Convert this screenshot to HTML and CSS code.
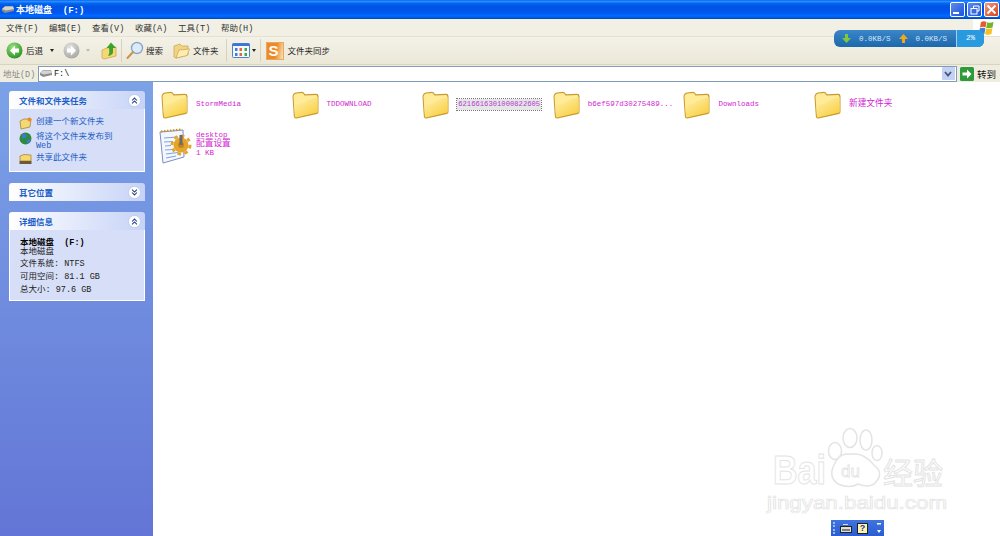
FILE: index.html
```html
<!DOCTYPE html>
<html>

<head>
    <meta charset="utf-8">
    <title>本地磁盘 (F:)</title>
    <link rel="stylesheet" href="styles.css">
</head>

<body>
    <svg class="defs" width="0" height="0">
        <defs>
            <linearGradient id="folderFill" x1="0" y1="0" x2="0.7" y2="1">
                <stop offset="0" stop-color="#fff3b4" />
                <stop offset="1" stop-color="#f9d044" />
            </linearGradient>
            <radialGradient id="greenBall" cx="0.4" cy="0.3" r="0.8">
                <stop offset="0" stop-color="#9be27c" />
                <stop offset="1" stop-color="#1c8a1c" />
            </radialGradient>
            <radialGradient id="greyBall" cx="0.4" cy="0.3" r="0.8">
                <stop offset="0" stop-color="#e4e4e0" />
                <stop offset="1" stop-color="#a0a09c" />
            </radialGradient>
            <symbol id="folder" viewBox="0 0 28 28">
                <path d="M1.500 6 Q1.500 2 5 1.500 L11 0.800 Q13 0.800 14 3.300 L25 2.800 Q27.500 2.800 27.500 5 L27.500 21 Q27.500 22.500 26 23 L5.500 27.500 Q3 28 2.800 25 Z" fill="#c99a30" />
                <path d="M2.500 6 Q2.500 3 5.500 2.500 L11 2 Q12.500 2 13.500 4.500 L25.500 4 L26.500 6 L26.500 21 L4 26 Z" fill="#ffeb98" />
                <path d="M26.500 6 L26.500 21.500 L5 26.500 Q4 26.500 4 25 L3.200 13.500 Q12 13.500 16 9.500 Z" fill="url(#folderFill)" />
            </symbol>
            <symbol id="collapse" viewBox="0 0 16 16">
                <circle cx="8" cy="8" r="7.500" fill="#fff" stroke="#b9c6ee" />
                <path d="M5 8 L8 5 L11 8 M5 11.500 L8 8.500 L11 11.500" fill="none" stroke="#24418f" stroke-width="1.300" />
            </symbol>
            <symbol id="expand" viewBox="0 0 16 16">
                <circle cx="8" cy="8" r="7.500" fill="#fff" stroke="#b9c6ee" />
                <path d="M5 4.500 L8 7.500 L11 4.500 M5 8 L8 11 L11 8" fill="none" stroke="#24418f" stroke-width="1.300" />
            </symbol>
            <symbol id="drive" viewBox="0 0 14 9">
                <path d="M1 4 L4 1 L12 1 L13 4 L13 6 L4 8 L1 6 Z" fill="#8c8c8c" />
                <path d="M1 4 L4 1.500 L12 1.500 L13 4 L5 5.500 Z" fill="#d4d4d4" />
            </symbol>
        </defs>
    </svg>

    <div class="window">
        <div class="titlebar">
            <svg class="title-icon" width="14" height="9"><use href="#drive" /></svg>
            <span class="title-text">本地磁盘  (F:)</span>
            <div class="caption-btns">
                <div class="caption-btn"><span class="min-glyph"></span></div>
                <div class="caption-btn">
                    <svg width="10" height="10" viewBox="0 0 10 10">
                        <path d="M3.500 3 V1 H9 V6 H7" fill="none" stroke="#fff" />
                        <rect x="1" y="3.500" width="6" height="5.500" fill="none" stroke="#fff" />
                    </svg>
                </div>
                <div class="caption-btn close">
                    <svg width="11" height="11" viewBox="0 0 11 11"><path d="M1.500 1.500 L9.500 9.500 M9.500 1.500 L1.500 9.500" stroke="#fff" stroke-width="2" /></svg>
                </div>
            </div>
        </div>

        <div class="menubar">
            <span class="menu-item">文件(F)</span>
            <span class="menu-item">编辑(E)</span>
            <span class="menu-item">查看(V)</span>
            <span class="menu-item">收藏(A)</span>
            <span class="menu-item">工具(T)</span>
            <span class="menu-item">帮助(H)</span>
            <div class="flag-box">
                <svg width="15" height="16" viewBox="0 0 15 16">
                    <path d="M2 2 Q5 0.500 7.500 2 L6.500 7.500 Q4 6 1 7.500 Z" fill="#e8592c" />
                    <path d="M8.200 2.200 Q11 3.500 14.500 2 L13.500 7.500 Q10 9 7.200 7.700 Z" fill="#72b52b" />
                    <path d="M0.900 8.300 Q4 7 6.400 8.300 L5.400 14 Q3 12.500 0 14 Z" fill="#3c7fd8" />
                    <path d="M7.100 8.500 Q10 9.800 13.400 8.300 L12.400 14 Q9 15.500 6.100 14.200 Z" fill="#f6c11f" />
                </svg>
            </div>
        </div>

        <div class="toolbar">
            <svg class="tool-icon back" width="17" height="17" viewBox="0 0 17 17">
                <circle cx="8.500" cy="8.500" r="8" fill="url(#greenBall)" />
                <path d="M9 3.500 L4 8.500 L9 13.500 L9 10.500 L13 10.500 L13 6.500 L9 6.500 Z" fill="#fff" />
            </svg>
            <span class="tool-label">后退</span>
            <span class="drop-arrow back-arrow"></span>
            <svg class="tool-icon forward" width="17" height="17" viewBox="0 0 17 17">
                <circle cx="8.500" cy="8.500" r="8" fill="url(#greyBall)" />
                <path d="M8 3.500 L13 8.500 L8 13.500 L8 10.500 L4 10.500 L4 6.500 L8 6.500 Z" fill="#fff" />
            </svg>
            <span class="drop-arrow off"></span>
            <svg class="tool-icon up" width="16" height="18" viewBox="0 0 16 18">
                <path d="M1 8 L6 6 L15 5 L15 14 L3 17 L1 16 Z" fill="#f4d873" stroke="#c8a24a" stroke-width="0.700" />
                <path d="M10 0.500 L15 6 L12 6 L12 10 Q12 13 7 14 Q9 11 8 6 L5.500 6 Z" fill="#3fa12d" />
            </svg>
            <span class="tool-sep"></span>
            <svg class="tool-icon search" width="18" height="19" viewBox="0 0 18 19">
                <circle cx="11" cy="7" r="5.500" fill="#dcebfa" stroke="#8ca6c6" stroke-width="1.400" />
                <path d="M7 11 L1.500 17" stroke="#c49650" stroke-width="2" stroke-linecap="round" />
            </svg>
            <span class="tool-label search-label">搜索</span>
            <svg class="tool-icon folders" width="17" height="16" viewBox="0 0 17 16">
                <path d="M1 3 L7 1 L9 3 L15 3 L15 12 L3 15 L1 14 Z" fill="#f0d384" stroke="#c8a24a" stroke-width="0.700" />
                <path d="M3 15 L6 7 L16.500 6 L14 12.500 Z" fill="#fdeeb0" stroke="#c8a24a" stroke-width="0.700" />
            </svg>
            <span class="tool-label">文件夹</span>
            <span class="tool-sep views-sep"></span>
            <svg class="tool-icon views" width="18" height="15" viewBox="0 0 18 15">
                <rect x="0.500" y="0.500" width="17" height="14" rx="1" fill="#f4f8ff" stroke="#4f7fd0" />
                <rect x="0.500" y="0.500" width="17" height="2.500" fill="#3f74d4" />
                <path d="M3 5 h2.500 v3 h-2.500 Z M3 10 h2.500 v3 h-2.500 Z" fill="#3c7fd8" />
                <path d="M7.500 5 h2.500 v3 h-2.500 Z M7.500 10 h2.500 v3 h-2.500 Z" fill="#dc6a3c" />
                <path d="M12.500 5 h2.500 v3 h-2.500 Z M12.500 10 h2.500 v3 h-2.500 Z" fill="#4aa63a" />
            </svg>
            <span class="drop-arrow views-arrow"></span>
            <span class="tool-sep sync-sep"></span>
            <div class="sync-icon">S</div>
            <span class="tool-label sync-label">文件夹同步</span>
        </div>

        <div class="addressbar">
            <span class="address-label">地址(D)</span>
            <div class="address-field">
                <svg width="14" height="9"><use href="#drive" /></svg>
                <span class="address-text">F:\</span>
                <div class="address-drop">
                    <svg width="8" height="6" viewBox="0 0 8 6"><path d="M1 1 L4 4.500 L7 1" fill="none" stroke="#44557f" stroke-width="1.800" /></svg>
                </div>
            </div>
            <svg class="go-icon" width="14" height="14" viewBox="0 0 14 14">
                <rect width="14" height="14" rx="1.500" fill="#2f9a3a" />
                <path d="M7 2.500 L11.500 7 L7 11.500 L7 8.500 L2.500 8.500 L2.500 5.500 L7 5.500 Z" fill="#fff" />
            </svg>
            <span class="go-label">转到</span>
        </div>

        <div class="main">
            <div class="sidebar">
                <div class="panel">
                    <div class="panel-head">
                        <span class="panel-title">文件和文件夹任务</span>
                        <svg width="13" height="13"><use href="#collapse" /></svg>
                    </div>
                    <div class="panel-body tasks">
                        <div class="task">
                            <svg class="task-icon" width="13" height="13" viewBox="0 0 13 13">
                                <path d="M1 4 L5 2 L12 2 L11 10 L2 12 Z" fill="#f4d873" stroke="#a98536" stroke-width="0.800" />
                                <circle cx="10.500" cy="2.500" r="2" fill="#ef8a2a" />
                            </svg>
                            <span class="task-link">创建一个新文件夹</span>
                        </div>
                        <div class="task">
                            <svg class="task-icon" width="13" height="13" viewBox="0 0 13 13">
                                <circle cx="6.500" cy="6.500" r="6" fill="#2e8b3d" />
                                <path d="M3 2.500 Q7 1 8 4 Q6 7 3 6 Z M8 8 L12 7 Q11 11 8 12 Z" fill="#3f78d8" />
                            </svg>
                            <span class="task-link">将这个文件夹发布到<br>Web</span>
                        </div>
                        <div class="task">
                            <svg class="task-icon" width="13" height="12" viewBox="0 0 13 12">
                                <path d="M1 3 L5 1.500 L12 2 L12 8 L1 8 Z" fill="#f4d873" stroke="#a98536" stroke-width="0.800" />
                                <path d="M0.500 8 L12.500 8 L12.500 11 L0.500 11 Z" fill="#6b5a3a" />
                            </svg>
                            <span class="task-link">共享此文件夹</span>
                        </div>
                    </div>
                </div>

                <div class="panel">
                    <div class="panel-head">
                        <span class="panel-title">其它位置</span>
                        <svg width="13" height="13"><use href="#expand" /></svg>
                    </div>
                </div>

                <div class="panel">
                    <div class="panel-head">
                        <span class="panel-title">详细信息</span>
                        <svg width="13" height="13"><use href="#collapse" /></svg>
                    </div>
                    <div class="panel-body details">
                        <div class="detail-name">本地磁盘  (F:)</div>
                        <div class="detail-kind">本地磁盘</div>
                        <div class="detail-row">文件系统: NTFS</div>
                        <div class="detail-row">可用空间: 81.1 GB</div>
                        <div class="detail-row">总大小: 97.6 GB</div>
                    </div>
                </div>
            </div>

            <div class="files">
                <div class="file">
                    <svg width="28" height="28"><use href="#folder" /></svg>
                    <span class="file-name">StormMedia</span>
                </div>
                <div class="file">
                    <svg width="28" height="28"><use href="#folder" /></svg>
                    <span class="file-name">TDDOWNLOAD</span>
                </div>
                <div class="file">
                    <svg width="28" height="28"><use href="#folder" /></svg>
                    <span class="file-name selected">6216616301000822605</span>
                </div>
                <div class="file">
                    <svg width="28" height="28"><use href="#folder" /></svg>
                    <span class="file-name">b6ef597d30275489...</span>
                </div>
                <div class="file">
                    <svg width="28" height="28"><use href="#folder" /></svg>
                    <span class="file-name">Downloads</span>
                </div>
                <div class="file">
                    <svg width="28" height="28"><use href="#folder" /></svg>
                    <span class="file-name cjk">新建文件夹</span>
                </div>
                <div class="file settings">
                    <svg width="34" height="36" viewBox="0 0 34 36">
                        <path d="M2 4 L25 2 L26 29 L5 35 Z" fill="#f4f7ff" stroke="#7c8fc0" />
                        <path d="M3 3.500 L24 1.500" stroke="#c8922c" stroke-width="2.200" stroke-dasharray="1.500 1.500" />
                        <path d="M6 10 L20 9 M6 14 L15 13.500 M7 18 L13 17.500 M7 22 L14 21.500 M8 26 L20 24.500 M8 30 L18 28" stroke="#7ea6dc" stroke-width="1.200" />
                        <circle cx="23" cy="17" r="7.500" fill="#e5a52c" />
                        <circle cx="23" cy="17" r="9" fill="none" stroke="#e5a52c" stroke-width="3" stroke-dasharray="3.500 3.500" />
                        <circle cx="23" cy="17" r="3" fill="#c4841c" />
                        <rect x="21.500" y="7" width="3" height="10" fill="#6a6a6a" />
                    </svg>
                    <div class="settings-text">
                        <div class="file-name">desktop</div>
                        <div class="file-name cjk">配置设置</div>
                        <div class="file-name">1 KB</div>
                    </div>
                </div>
            </div>
        </div>
    </div>

    <div class="speed-widget">
        <svg class="speed-arrow" width="9" height="9" viewBox="0 0 9 9"><path d="M3 0 h3 v4 h3 L4.500 9 L0 4 h3 Z" fill="#7fc73c" /></svg>
        <span class="speed-val">0.0KB/S</span>
        <svg class="speed-arrow" width="9" height="9" viewBox="0 0 9 9"><path d="M3 9 h3 v-4 h3 L4.500 0 L0 5 h3 Z" fill="#f0a81c" /></svg>
        <span class="speed-val">0.0KB/S</span>
        <span class="speed-pct">2%</span>
    </div>

    <svg class="watermark" width="190" height="100" viewBox="0 0 190 100">
        <ellipse cx="69" cy="26" rx="6.500" ry="8.500" class="wm-shape" />
        <ellipse cx="84" cy="13" rx="7" ry="9.500" class="wm-shape" />
        <ellipse cx="100" cy="15" rx="6" ry="10" class="wm-shape" />
        <ellipse cx="111" cy="28" rx="5" ry="7.500" class="wm-shape" />
        <path d="M80 29 Q72 30 68 40 Q62 52 72 59 Q84 64 92 59 Q104 64 110 57 Q118 48 108 40 Q98 28 88 29 Z" class="wm-shape" />
        <text class="wm-big" x="7" y="59" textLength="53" lengthAdjust="spacingAndGlyphs">Bai</text>
        <text class="wm-du" x="75" y="52">du</text>
        <text class="wm-cjk" x="117" y="59">经验</text>
        <text class="wm-url" x="1" y="84" textLength="180" lengthAdjust="spacingAndGlyphs">jingyan.baidu.com</text>
    </svg>

    <div class="langbar">
        <span class="lang-grip"></span>
        <svg class="lang-kbd" width="12" height="9" viewBox="0 0 12 9">
            <rect x="0.500" y="2.500" width="11" height="6" fill="#ddd" stroke="#222" />
            <path d="M2 6 h8" stroke="#222" />
            <path d="M3 0.500 h5" stroke="#ddd" />
        </svg>
        <span class="lang-help">?</span>
        <svg class="lang-arrows" width="4" height="12" viewBox="0 0 4 12">
            <path d="M0 1 h4 v1.500 h-4 Z M0 8 h4 L2 11 Z" fill="#fff" />
        </svg>
    </div>
</body>

</html>
```

FILE: styles.css
```css
* {
    box-sizing: border-box;
}

html,
body {
    margin: 0;
    height: 100%;
    overflow: hidden;
    background: #fff;
}

body {
    font-family: "Liberation Mono", "Noto Sans CJK SC", monospace;
    font-size: 8.5px;
    color: #222;
}

.defs {
    position: absolute;
}

.window {
    display: flex;
    flex-direction: column;
    height: 536px;
}

/* title bar */
.titlebar {
    height: 19px;
    display: flex;
    align-items: center;
    padding-left: 1px;
    background: linear-gradient(#0058ee, #3593ff 6%, #127dff 12%, #0262ee 20%, #0054e3 34%, #0055eb 60%, #005bf5 72%, #026afe 82%, #0062ef 90%, #0052d6 96%, #0040ab);
}

.title-icon {
    margin-right: 1px;
}

.title-text {
    color: #fff;
    font-weight: bold;
    font-size: 9px;
    white-space: pre;
}

.caption-btns {
    margin-left: auto;
    display: flex;
    gap: 2px;
    padding-right: 1px;
}

.caption-btn {
    width: 15px;
    height: 15px;
    border: 1px solid #fff;
    border-radius: 2px;
    background: linear-gradient(135deg, #5c8cf0, #1c52d8);
    display: flex;
    align-items: center;
    justify-content: center;
}

.caption-btn.close {
    background: linear-gradient(135deg, #f09a80, #d8401c);
}

.min-glyph {
    width: 6px;
    height: 2px;
    background: #fff;
    margin: 6px 3px 0 0;
}

/* menu */
.menubar {
    height: 17px;
    display: flex;
    align-items: center;
    gap: 13px;
    padding-left: 6px;
    background: #f2f0e4;
}

.menu-item {
    width: 30px;
    white-space: nowrap;
    color: #333;
}

.flag-box {
    margin-left: auto;
    width: 27px;
    height: 17px;
    background: #fff;
    display: flex;
    justify-content: center;
    align-items: center;
}

/* toolbar */
.toolbar {
    height: 29px;
    display: flex;
    align-items: center;
    padding-left: 6px;
    background: linear-gradient(#f4f2e8, #ebe8d8);
    border-top: 1px solid #e4e1d0;
    border-bottom: 1px solid #d8d4c0;
}

.tool-label {
    margin-left: 3px;
    white-space: nowrap;
    color: #222;
}

.tool-sep {
    width: 1px;
    height: 23px;
    background: #d5d2c0;
    margin: 0 4px;
}

.drop-arrow {
    width: 0;
    height: 0;
    border-left: 2.500px solid transparent;
    border-right: 2.500px solid transparent;
    border-top: 3px solid #222;
    margin: 0 6px;
}

.drop-arrow.off {
    border-top-color: #bbb;
}

.back-arrow {
    margin-left: 7px;
    margin-right: 9px;
}

.up {
    margin-left: 5px;
}

.search-label {
    margin-left: 2px;
    margin-right: 10px;
}

.views-sep {
    margin-left: 7px;
    margin-right: 5px;
}

.views-arrow {
    margin: 0 0 0 2px;
}

.sync-sep {
    margin-left: 4px;
    margin-right: 5px;
}

.sync-icon {
    width: 18px;
    height: 18px;
    background: linear-gradient(100deg, #ee8a24 55%, #fbe4c4);
    border: 1px solid #e8a860;
    color: #fff;
    font-family: "Liberation Sans", sans-serif;
    font-weight: bold;
    font-size: 15px;
    line-height: 16px;
    padding-left: 2px;
}

.sync-label {
    margin-left: 4px;
}

/* address */
.addressbar {
    height: 17px;
    display: flex;
    align-items: center;
    padding: 0 4px 0 3px;
    background: #efede0;
}

.address-label {
    width: 35px;
    color: #8a8a80;
}

.address-field {
    flex: 1;
    height: 16px;
    background: #fff;
    border: 1px solid #7f9db9;
    display: flex;
    align-items: center;
    padding-right: 1px;
}

.address-text {
    margin-left: 1px;
    color: #111;
}

.address-drop {
    margin-left: auto;
    width: 13px;
    height: 13px;
    border-radius: 1px;
    background: #c3d1f3;
    display: flex;
    align-items: center;
    justify-content: center;
}

.go-icon {
    margin-left: 3px;
}

.go-label {
    margin-left: 3px;
    color: #111;
    font-size: 9.500px;
}

/* main area */
.main {
    flex: 1;
    display: flex;
    min-height: 0;
}

.sidebar {
    width: 153px;
    padding: 9px 8px 0 9px;
    background: linear-gradient(#7ba2e7, #6375d6);
    display: flex;
    flex-direction: column;
    gap: 11px;
}

.panel-head {
    height: 18px;
    display: flex;
    align-items: center;
    justify-content: space-between;
    padding: 0 4px 0 10px;
    border-radius: 3px 3px 0 0;
    background: linear-gradient(90deg, #fff, #c6d3f7);
}

.panel-title {
    color: #215dc6;
    font-weight: bold;
}

.panel-body {
    background: #d6dff7;
    border: 1px solid #fff;
    border-top: 0;
}

.tasks {
    height: 63px;
    padding: 8px 0 0 9px;
    display: flex;
    flex-direction: column;
    gap: 2px;
}

.task {
    display: flex;
    gap: 4px;
    line-height: 9px;
}

.task-icon {
    flex: none;
}

.task-link {
    color: #215dc6;
    padding-top: 1px;
}

.details {
    height: 71px;
    padding: 8px 0 0 10px;
    line-height: 9px;
    color: #222;
}

.detail-name {
    font-weight: bold;
    color: #000;
    white-space: pre;
    line-height: 10px;
}

.detail-kind {
    margin-bottom: 1px;
}

.detail-row {
    line-height: 13px;
}

/* file list */
.files {
    flex: 1;
    display: grid;
    grid-template-columns: repeat(6, 130.600px);
    grid-auto-rows: 37px;
    align-content: start;
    padding: 4px 0 0 7px;
    background: #fff;
}

.file {
    display: flex;
    align-items: center;
    gap: 8px;
    min-width: 0;
}

.file-name {
    color: #d21ed2;
    font-size: 7.500px;
    line-height: 9px;
    white-space: nowrap;
}

.file-name.cjk {
    font-size: 8.700px;
}

.file-name.selected {
    padding: 1px;
    font-size: 7.200px;
    background: #e6e6ea;
    color: #b43cc8;
    outline: 1px dotted #777;
}

.settings {
    align-items: flex-start;
    gap: 4px;
    margin: 5px 0 0 -2px;
}

.settings-text {
    padding-top: 3px;
}

/* floating bits */
.speed-widget {
    position: absolute;
    left: 834px;
    top: 30px;
    width: 150px;
    height: 17px;
    border-radius: 6px;
    background: linear-gradient(#3a86c8, #1c68ac);
    display: flex;
    align-items: center;
    padding-left: 8px;
    color: #d5e6f5;
    font-size: 7.500px;
}

.speed-arrow {
    flex: none;
}

.speed-val {
    margin: 0 8px;
    white-space: nowrap;
}

.speed-pct {
    flex: none;
    margin-left: auto;
    width: 28px;
    height: 100%;
    text-align: center;
    line-height: 17px;
    background: #2a9ae0;
    border-left: 1px solid #a8cfea;
    border-radius: 0 6px 6px 0;
    color: #fff;
}

.watermark {
    position: absolute;
    left: 766px;
    top: 425px;
}

.wm-shape {
    fill: #fff;
    stroke: #e4e4e4;
    stroke-width: 1.500;
}

.watermark text {
    fill: #fff;
    stroke: #e4e4e4;
    stroke-width: 1;
    font-family: "Liberation Sans", sans-serif;
}

.watermark .wm-big {
    font-size: 40px;
    font-weight: bold;
}

.watermark .wm-du {
    font-size: 17px;
    stroke-width: 0.800;
}

.watermark .wm-cjk {
    font-size: 30px;
    font-family: "Noto Sans CJK SC", sans-serif;
}

.watermark .wm-url {
    font-size: 17.500px;
    stroke-width: 0.700;
}

.langbar {
    position: absolute;
    left: 831px;
    top: 520px;
    width: 53px;
    height: 16px;
    background: linear-gradient(#3f74e0, #2a5cd0);
    display: flex;
    align-items: center;
    padding-left: 2px;
}

.lang-grip {
    width: 2px;
    height: 12px;
    border-left: 2px dotted #9db8ee;
}

.lang-kbd {
    margin-left: 5px;
}

.lang-help {
    margin-left: 5px;
    width: 11px;
    height: 11px;
    background: #fff3b0;
    border: 1px solid #222;
    text-align: center;
    font-family: "Liberation Sans", sans-serif;
    font-weight: bold;
    font-size: 9px;
    line-height: 9px;
    color: #1c3a9c;
}

.lang-arrows {
    margin-left: 9px;
}
```
